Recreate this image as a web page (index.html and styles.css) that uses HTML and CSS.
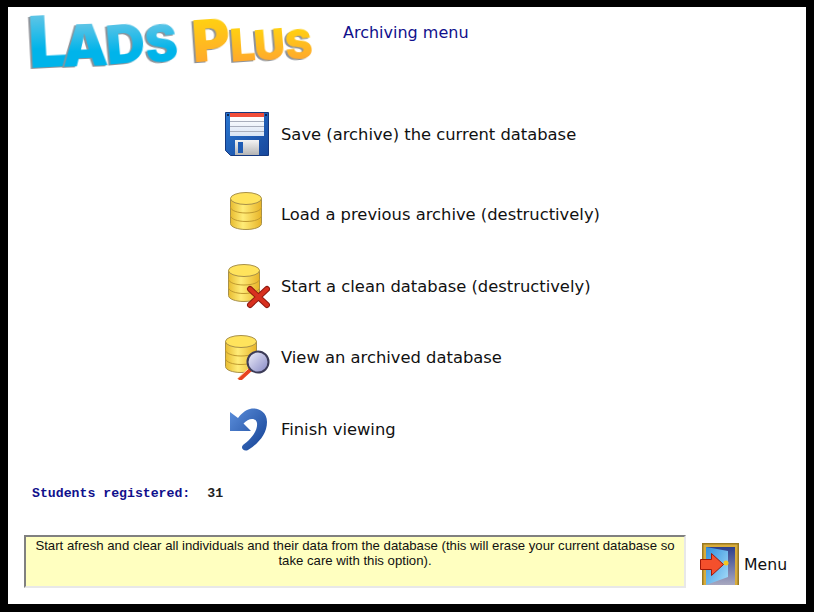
FILE: index.html
```html
<!DOCTYPE html>
<html lang="en">
<head>
  <meta charset="UTF-8" />
  <title>Lads Plus - Archiving menu</title>
  <link rel="stylesheet" href="styles.css">
</head>
<body>
  <svg class="defs" width="0" height="0">
    <defs>
      <linearGradient id="gold" x1="0" y1="0" x2="1" y2="0">
        <stop offset="0" stop-color="#e8bc30"/>
        <stop offset="0.4" stop-color="#ffec78"/>
        <stop offset="1" stop-color="#e8b428"/>
      </linearGradient>
      <linearGradient id="lens" x1="0" y1="0" x2="1" y2="1">
        <stop offset="0" stop-color="#f2f2fc"/>
        <stop offset="1" stop-color="#8486c4"/>
      </linearGradient>
      <linearGradient id="sky" x1="0" y1="0" x2="1" y2="1">
        <stop offset="0" stop-color="#2f8fdc"/>
        <stop offset="1" stop-color="#a8defa"/>
      </linearGradient>
      <linearGradient id="night" x1="0" y1="0" x2="0" y2="1">
        <stop offset="0" stop-color="#2c3f8c"/>
        <stop offset="1" stop-color="#a8a8c0"/>
      </linearGradient>
      <linearGradient id="undoBlue" x1="0" y1="0" x2="1" y2="1">
        <stop offset="0" stop-color="#5c8fdc"/>
        <stop offset="1" stop-color="#123f92"/>
      </linearGradient>
      <linearGradient id="floppyBlue" x1="0" y1="0" x2="1" y2="1">
        <stop offset="0" stop-color="#2a78d2"/>
        <stop offset="1" stop-color="#17479c"/>
      </linearGradient>
      <linearGradient id="shutter" x1="0" y1="0" x2="0" y2="1">
        <stop offset="0" stop-color="#f4f4f4"/>
        <stop offset="1" stop-color="#b4b4b4"/>
      </linearGradient>
      <linearGradient id="labelFade" x1="0" y1="0" x2="0" y2="1">
        <stop offset="0" stop-color="#ffffff"/>
        <stop offset="1" stop-color="#d8e4f4"/>
      </linearGradient>
      <symbol id="db" viewBox="0 0 32 38">
        <path d="M.5 6.500v25C.5 35 7.500 37.500 16 37.500s15.500-2.500 15.500-6v-25z" fill="url(#gold)" stroke="#a89048"/>
        <path d="M.5 15c0 3.500 7 6 15.500 6s15.500-2.500 15.500-6M.5 23.500c0 3.500 7 6 15.500 6s15.500-2.500 15.500-6" fill="none" stroke="#c09a30"/>
        <ellipse cx="16" cy="6.500" rx="15.500" ry="6" fill="#ffe35c" stroke="#a89048"/>
      </symbol>
    </defs>
  </svg>

  <div class="window">
    <header class="top">
      <div class="logo">
        <span class="lads"><span class="big">L</span><span class="a">A</span><span class="d">D</span><span class="s">S</span></span>
        <span class="plus"><span class="big-p">P</span><span class="l">L</span><span class="u">U</span><span class="s2">S</span></span>
      </div>
      <div class="title">Archiving menu</div>
    </header>

    <div class="menu">
      <div class="row row-save">
        <svg class="icon" width="46" height="46" viewBox="0 0 46 46">
          <path d="M1.500 1.500h43v43H6.500l-5-5z" fill="url(#floppyBlue)" stroke="#14387f"/>
          <rect x="6" y="2" width="34" height="4" fill="#f04d3a"/>
          <rect x="6" y="6" width="34" height="19" fill="url(#labelFade)"/>
          <path d="M6 10.500h34M6 15.500h34M6 20.500h34" stroke="#a8aebc"/>
          <rect x="11" y="29" width="24" height="15" fill="url(#shutter)"/>
          <rect x="14" y="31" width="5" height="11" fill="#1f5cb4"/>
          <rect x="3" y="3" width="2" height="2" fill="#10244c"/>
          <rect x="41" y="3" width="2" height="2" fill="#10244c"/>
        </svg>
        <span class="label">Save (archive) the current database</span>
      </div>
      <div class="row">
        <svg class="icon" width="46" height="46" viewBox="0 0 46 46">
          <use href="#db" x="6" y="1" width="32" height="38"/>
        </svg>
        <span class="label">Load a previous archive (destructively)</span>
      </div>
      <div class="row">
        <svg class="icon" width="46" height="46" viewBox="0 0 46 46">
          <use href="#db" x="4" y="1" width="32" height="38"/>
          <path d="M26 26l17 16M43 26L26 42" stroke="#8e1a10" stroke-width="6" stroke-linecap="round"/>
          <path d="M26 26l17 16M43 26L26 42" stroke="#d8301f" stroke-width="4" stroke-linecap="round"/>
        </svg>
        <span class="label">Start a clean database (destructively)</span>
      </div>
      <div class="row row-view">
        <svg class="icon" width="46" height="46" viewBox="0 0 46 46">
          <use href="#db" x="1" y="1" width="32" height="38"/>
          <path d="M27 35L15 46" stroke="#e8431f" stroke-width="4"/>
          <path d="M24 35L13 45" stroke="#ffd9b0" stroke-width="1"/>
          <circle cx="34" cy="28" r="10.500" fill="url(#lens)" stroke="#3c3c58" stroke-width="2"/>
        </svg>
        <span class="label">View an archived database</span>
      </div>
      <div class="row">
        <svg class="icon" width="46" height="46" viewBox="0 0 46 46">
          <path d="M6 6V25H27L19.500 17.500C24 12 32 11 33 17C34 25 26 34 19 39C16 42 20 46 24 44C34 38 43 28 43 16C43 5 33 1 26 3C21 4 17 8 14 12Z" fill="url(#undoBlue)"/>
        </svg>
        <span class="label">Finish viewing</span>
      </div>
    </div>

    <div class="stats">Students registered:<span class="count">31</span></div>

    <footer class="bottom">
      <div class="hint">Start afresh and clear all individuals and their data from the database (this will erase your current database so take care with this option).</div>
      <div class="menu-btn">
        <svg class="door" width="40" height="42" viewBox="0 0 40 42">
          <rect x="2" y="0" width="37" height="42" fill="#9a7a22"/>
          <rect x="3.500" y="1.500" width="34" height="40.500" fill="#d8ac3c"/>
          <rect x="6" y="4" width="29" height="38" fill="url(#night)"/>
          <path d="M6 4l22 4v26L6 42z" fill="url(#sky)"/>
          <circle cx="26" cy="20" r="2.500" fill="#f6c820"/>
          <path d="M0.500 16.500h11v-6l12 11-12 11v-6h-11z" fill="#f4502c" stroke="#a01808"/>
        </svg>
        <span class="menu-text">Menu</span>
      </div>
    </footer>
  </div>
</body>
</html>
```

FILE: styles.css
```css
html, body {
  margin: 0;
  height: 100%;
}

body {
  background-color: #000000;
  overflow: hidden;
}

.defs {
  display: block;
  height: 0;
}

.window {
  background-color: #ffffff;
  width: 798px;
  height: 597px;
  margin: 7px 8px 0 8px;
  display: flex;
  flex-direction: column;
  font-family: "DejaVu Sans", Verdana, sans-serif;
}

.top {
  display: flex;
  align-items: flex-start;
  height: 104px;
}

/* logo is real text, each letter tilted a bit */
.logo {
  display: flex;
  gap: 14px;
  margin: 4px 0 0 20px;
  width: 315px;
  height: 70px;
  font-family: "Inter", sans-serif;
  font-weight: 900;
  line-height: 1.2;
}

.lads, .plus {
  display: flex;
  align-items: flex-end;
  height: 70px;
}

.lads span, .plus span {
  display: block;
  -webkit-background-clip: text;
  background-clip: text;
  color: transparent;
  filter: drop-shadow(-2px 1px 0 #8e9298);
}

.lads span {
  background-image: linear-gradient(#5cc4e6 15%, #00b4ea 60%);
}

.plus span {
  background-image: linear-gradient(#ffcf12 20%, #ffa92c 80%);
}

.big {
  font-size: 72px;
  line-height: 1;
  transform: translateY(-4px) rotate(-3deg);
  margin-right: -7px;
}

.a {
  font-size: 58px;
  line-height: 1;
  transform: translateY(-7px) rotate(-2deg);
  margin-right: -2px;
}

.d {
  font-size: 54px;
  transform: translateY(-4px) rotate(-5deg);
}

.s {
  font-size: 49px;
  transform: translateY(-7px) rotate(-6deg);
}

.big-p {
  font-size: 58px;
  transform: translateY(-5px) rotate(-4deg);
}

.l {
  font-size: 45px;
  transform: translateY(-9px) rotate(-4deg);
  margin-right: -1px;
}

.u {
  font-size: 43px;
  transform: translateY(-10px) rotate(-5deg);
}

.s2 {
  font-size: 41px;
  transform: translateY(-12px) rotate(-6deg);
}

.title {
  color: #10108c;
  font-size: 16px;
  margin: 16px 0 0 0;
}

.menu {
  display: flex;
  flex-direction: column;
  gap: 26px;
  padding-left: 216px;
}

.row {
  display: flex;
  align-items: center;
  gap: 11px;
  height: 46px;
}

.row-save {
  margin-bottom: 8px;
}

.row-view {
  margin-top: -1px;
}

.label {
  font-size: 16.35px;
  color: #111111;
}

.stats {
  font-family: "Liberation Mono", monospace;
  font-weight: bold;
  font-size: 13.2px;
  color: #10108c;
  margin: 34px 0 0 24px;
  white-space: pre;
}

.count {
  color: #222222;
  margin-left: 17px;
}

.bottom {
  display: flex;
  align-items: flex-start;
  margin: 34px 0 0 16px;
}

.hint {
  box-sizing: border-box;
  width: 662px;
  height: 53px;
  background-color: #ffffc0;
  border: 2px solid;
  border-color: #808080 #e8e8e8 #e8e8e8 #808080;
  font-family: "Liberation Sans", Arial, sans-serif;
  font-size: 13.2px;
  line-height: 15px;
  color: #111111;
  text-align: center;
  padding: 1px 6px;
}

.menu-btn {
  display: flex;
  align-items: center;
  margin: 8px 0 0 14px;
  gap: 4px;
}

.menu-text {
  font-size: 15.7px;
  color: #111111;
}
```
